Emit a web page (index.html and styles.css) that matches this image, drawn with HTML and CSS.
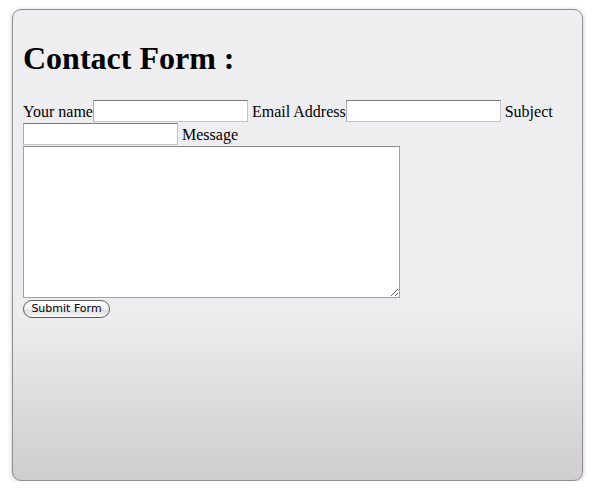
FILE: index.html
```html
<!DOCTYPE html>
<html>
<head>
<meta charset="utf-8">
<link rel="stylesheet" href="styles.css">
</head>
<body>
<div class="card">
  <h1 class="title">Contact Form :</h1>
  <form class="form">Your name<input class="field" type="text"> Email Address<input class="field" type="text"> Subject <input class="field" type="text"> Message <textarea class="message"></textarea>
    <div class="actions"><button class="submit" type="button">Submit Form</button></div>
  </form>
</div>
</body>
</html>
```
FILE: styles.css
```css
html, body {
  margin: 0;
  padding: 0;
  background: #ffffff;
}
body {
  font-family: "Liberation Serif", "Times New Roman", serif;
  font-size: 16px;
  color: #000;
}
.card {
  box-sizing: border-box;
  width: 571px;
  height: 472px;
  margin: 9px 0 0 12px;
  padding: 6px 10px 0 10px;
  border: 1px solid #8d8c8f;
  border-radius: 9px;
  background: linear-gradient(to bottom, #efeef1 0, #edecef 305px, #d4d2d5 440px, #d0ced1 100%);
  box-shadow: 0 1px 5px rgba(0, 0, 0, 0.22);
}
.title {
  font-size: 32px;
  font-weight: bold;
  margin: 24px 0 23px 0;
  line-height: normal;
}
.form {
  margin: 0;
  line-height: 23px;
}
.field {
  box-sizing: border-box;
  width: 155px;
  height: 22px;
  margin: 0;
  padding: 1px 2px;
  vertical-align: top;
  background: #fff;
  border: 1px solid #c4c4c4;
  border-top-color: #7a7a7a;
  border-left-color: #a8a8a8;
  font-size: 13px;
}
.message {
  box-sizing: border-box;
  width: 377px;
  height: 152px;
  margin: 0;
  padding: 2px;
  vertical-align: top;
  background: #fff;
  border: 1px solid #a0a0a0;
  border-top-color: #8a8a8a;
  font-family: "DejaVu Sans Mono", monospace;
  font-size: 13px;
}
.actions {
  line-height: normal;
}
.submit {
  box-sizing: border-box;
  width: 87px;
  height: 18px;
  margin: 2px 0 0 0;
  padding: 0;
  border: 1px solid #5e5e5e;
  border-radius: 9px;
  background: linear-gradient(to bottom, #ffffff 0, #f1f1f1 50%, #e2e2e2 60%, #f6f6f6 100%);
  font-family: "DejaVu Sans", sans-serif;
  font-size: 11px;
  line-height: 16px;
  color: #000;
}
```
